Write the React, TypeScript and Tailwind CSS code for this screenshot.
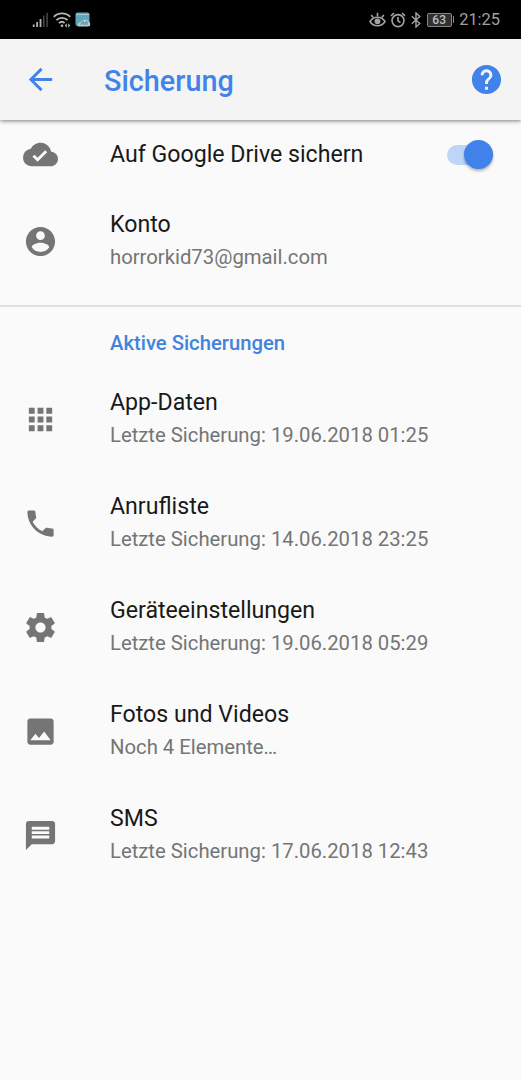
import type { ReactNode } from 'react';
import { MdApps, MdArrowBack, MdCloudDone, MdHelp, MdImage, MdMessage } from 'react-icons/md';

function Glyph({ d }: { d: string }) {
  return (
    <svg viewBox="0 0 24 24" className="size-[35px]" fill="currentColor">
      <path d={d} />
    </svg>
  );
}

const accountPath =
  'M12 2C6.48 2 2 6.48 2 12s4.48 10 10 10 10-4.48 10-10S17.52 2 12 2zm0 3c1.66 0 3 1.34 3 3s-1.34 3-3 3-3-1.34-3-3 1.34-3 3-3zm0 14.2c-2.5 0-4.71-1.28-6-3.22.03-1.99 4-3.08 6-3.08 1.99 0 5.97 1.09 6 3.08-1.29 1.94-3.5 3.22-6 3.22z';
const phonePath =
  'M6.62 10.79c1.44 2.83 3.76 5.14 6.59 6.59l2.2-2.2c.27-.27.67-.36 1.02-.24 1.12.37 2.33.57 3.57.57.55 0 1 .45 1 1V20c0 .55-.45 1-1 1-9.39 0-17-7.61-17-17 0-.55.45-1 1-1h3.5c.55 0 1 .45 1 1 0 1.25.2 2.45.57 3.57.11.35.03.74-.25 1.02l-2.2 2.2z';
const settingsPath =
  'M19.43 12.98c.04-.32.07-.64.07-.98s-.03-.66-.07-.98l2.11-1.65c.19-.15.24-.42.12-.64l-2-3.46c-.12-.22-.39-.3-.61-.22l-2.49 1c-.52-.4-1.08-.73-1.69-.98l-.38-2.65C14.46 2.18 14.25 2 14 2h-4c-.25 0-.46.18-.49.42l-.38 2.65c-.61.25-1.17.59-1.69.98l-2.49-1c-.23-.09-.49 0-.61.22l-2 3.46c-.13.22-.07.49.12.64l2.11 1.65c-.04.32-.07.65-.07.98s.03.66.07.98l-2.11 1.65c-.19.15-.24.42-.12.64l2 3.46c.12.22.39.3.61.22l2.49-1c.52.4 1.08.73 1.69.98l.38 2.65c.03.24.24.42.49.42h4c.25 0 .46-.18.49-.42l.38-2.65c.61-.25 1.17-.59 1.69-.98l2.49 1c.23.09.49 0 .61-.22l2-3.46c.12-.22.07-.49-.12-.64l-2.11-1.65zM12 15.5c-1.93 0-3.5-1.57-3.5-3.5s1.57-3.5 3.5-3.5 3.5 1.57 3.5 3.5-1.57 3.5-3.5 3.5z';

function StatusBar() {
  return (
    <div className="flex h-[39px] shrink-0 items-center justify-between bg-black pl-8 pr-[21px] text-[#a3a3a3]">
      <div className="flex items-center">
        <svg viewBox="0 0 17 16" className="h-4 w-[17px]" fill="#b4b4b4">
          <rect x="0.8" y="12.5" width="1.8" height="2.5" />
          <rect x="4.2" y="10" width="1.8" height="5" />
          <rect x="7.6" y="7" width="1.8" height="8" />
          <rect x="11" y="3.5" width="1.5" height="11.5" fill="#484848" />
          <rect x="14.3" y="0.8" width="1.5" height="14.2" fill="#484848" />
        </svg>
        <svg viewBox="0 0 19 16" className="ml-1 h-4 w-[19px]" fill="none" stroke="#b8b8b8" strokeWidth="1.8">
          <path d="M0.8 4.8C5.2 0.2 12.8 0.2 17.2 4.8" />
          <path d="M3.4 8.1c3-3.1 8.2-3.1 11.2 0" />
          <path d="M6 11.2c1.7-1.7 4-1.7 5.6-.2" />
          <circle cx="9" cy="13.8" r="1.3" fill="#b8b8b8" stroke="none" />
          <path d="m13.8 11.3-2 2.2 2 2.2zM15.3 11.3l2 2.2-2 2.2z" fill="#b8b8b8" stroke="none" />
        </svg>
        <svg viewBox="0 0 16 16" className="ml-[3px] size-4">
          <rect x="0.5" y="0.5" width="14" height="13.5" rx="2" fill="#60a5bb" />
          <path d="M1 2.5h13" stroke="#9dcbd7" strokeWidth="1" />
          <path d="M3 14.5c-1-3 1.3-4.7 3.1-4.1C7 6.9 13 6.7 14 10c2 1.3 1.6 4.5-.8 4.5z" fill="#b2ced3" />
          <path d="m5.5 12.8 2.7-3.4v3.4M10 13v-2.5l2-1v3.5" fill="none" stroke="#40869a" strokeWidth="1" />
        </svg>
      </div>
      <div className="flex items-center">
        <svg viewBox="0 0 17 16" className="h-4 w-[17px]" fill="none" stroke="currentColor" strokeWidth="1.6">
          <path d="M1 9.5C4.6 3.9 12.4 3.9 16 9.5 12.4 15.2 4.6 15.2 1 9.5z" />
          <circle cx="8.5" cy="9.3" r="2.9" fill="currentColor" stroke="none" />
          <path d="M8.5.8v3.4M2.2 3.1l2 2.5M14.8 3.1l-2 2.5" />
        </svg>
        <svg viewBox="0 0 16 16" className="ml-1 size-4" fill="none" stroke="currentColor" strokeWidth="1.6">
          <circle cx="8" cy="8.6" r="6" />
          <path d="M8 5v3.9l2.4 1.7M1 3.8 4 1M15 3.8 12 1" />
        </svg>
        <svg viewBox="0 0 10 16" className="ml-[5px] h-4 w-[10px]" fill="none" stroke="currentColor" strokeWidth="1.4">
          <path d="m.8 4.2 8 7.4L5 15V1l3.8 3.4-8 7.4" />
        </svg>
        <div className="ml-[6px] flex h-[14px] w-[25px] items-center justify-center rounded-[2px] border border-[#858585] bg-[#303030] text-[12px] font-medium leading-none text-[#bebebe]">
          63
        </div>
        <div className="ml-px h-[7px] w-[1.5px] bg-[#858585]" />
        <span className="ml-[5px] pt-px text-[16.4px] leading-none text-[#a0a0a0]">21:25</span>
      </div>
    </div>
  );
}

function Row({ icon, title, detail }: { icon: ReactNode; title: string; detail: string }) {
  return (
    <div className="flex h-[104px] items-center pl-[23px]">
      <div className="w-[87px] text-[#757575]">{icon}</div>
      <div>
        <div className="text-[23.15px] leading-8 text-[#191919]">{title}</div>
        <div className="text-[20.3px] leading-8 text-[#757575]">{detail}</div>
      </div>
    </div>
  );
}

const backups = [
  { icon: <MdApps size={35} />, title: 'App-Daten', detail: 'Letzte Sicherung: 19.06.2018 01:25' },
  { icon: <Glyph d={phonePath} />, title: 'Anrufliste', detail: 'Letzte Sicherung: 14.06.2018 23:25' },
  { icon: <Glyph d={settingsPath} />, title: 'Geräteeinstellungen', detail: 'Letzte Sicherung: 19.06.2018 05:29' },
  { icon: <MdImage size={35} />, title: 'Fotos und Videos', detail: 'Noch 4 Elemente…' },
  { icon: <MdMessage size={35} />, title: 'SMS', detail: 'Letzte Sicherung: 17.06.2018 12:43' },
];

export default function App() {
  return (
    <div className="flex h-[1080px] w-[521px] flex-col overflow-hidden bg-[#fafafa] font-['Roboto',sans-serif]">
      <StatusBar />
      <header className="z-10 flex h-[81px] shrink-0 items-center bg-[#f4f4f4] pl-[23px] pr-[17px] text-[#4283ea] shadow-[0_1px_4px_rgba(0,0,0,0.5)]">
        <MdArrowBack size={35} />
        <h1 className="ml-[46px] flex-1 pt-[3px] text-[28.8px] font-medium leading-none">Sicherung</h1>
        <MdHelp size={35} />
      </header>

      <div className="flex h-[69px] shrink-0 items-center pl-[23px] pr-7">
        <MdCloudDone size={35} className="text-[#757575]" />
        <span className="ml-[52px] flex-1 text-[23.15px] leading-8 text-[#191919]">Auf Google Drive sichern</span>
        <div className="flex h-5 w-[46px] items-center justify-end rounded-full bg-[#bfd5f8]">
          <div className="size-[29px] shrink-0 rounded-full bg-[#4081ec] shadow-[0_2px_3px_rgba(0,0,0,0.3)]" />
        </div>
      </div>

      <Row icon={<Glyph d={accountPath} />} title="Konto" detail="horrorkid73@gmail.com" />
      <div className="mt-3 h-0.5 shrink-0 bg-[#dfdfdf]" />
      <h2 className="h-[60px] shrink-0 pl-[110px] pt-5 text-[20.26px] font-medium leading-8 text-[#4283dc]">
        Aktive Sicherungen
      </h2>
      <main>
        {backups.map((item) => (
          <Row key={item.title} {...item} />
        ))}
      </main>
    </div>
  );
}
